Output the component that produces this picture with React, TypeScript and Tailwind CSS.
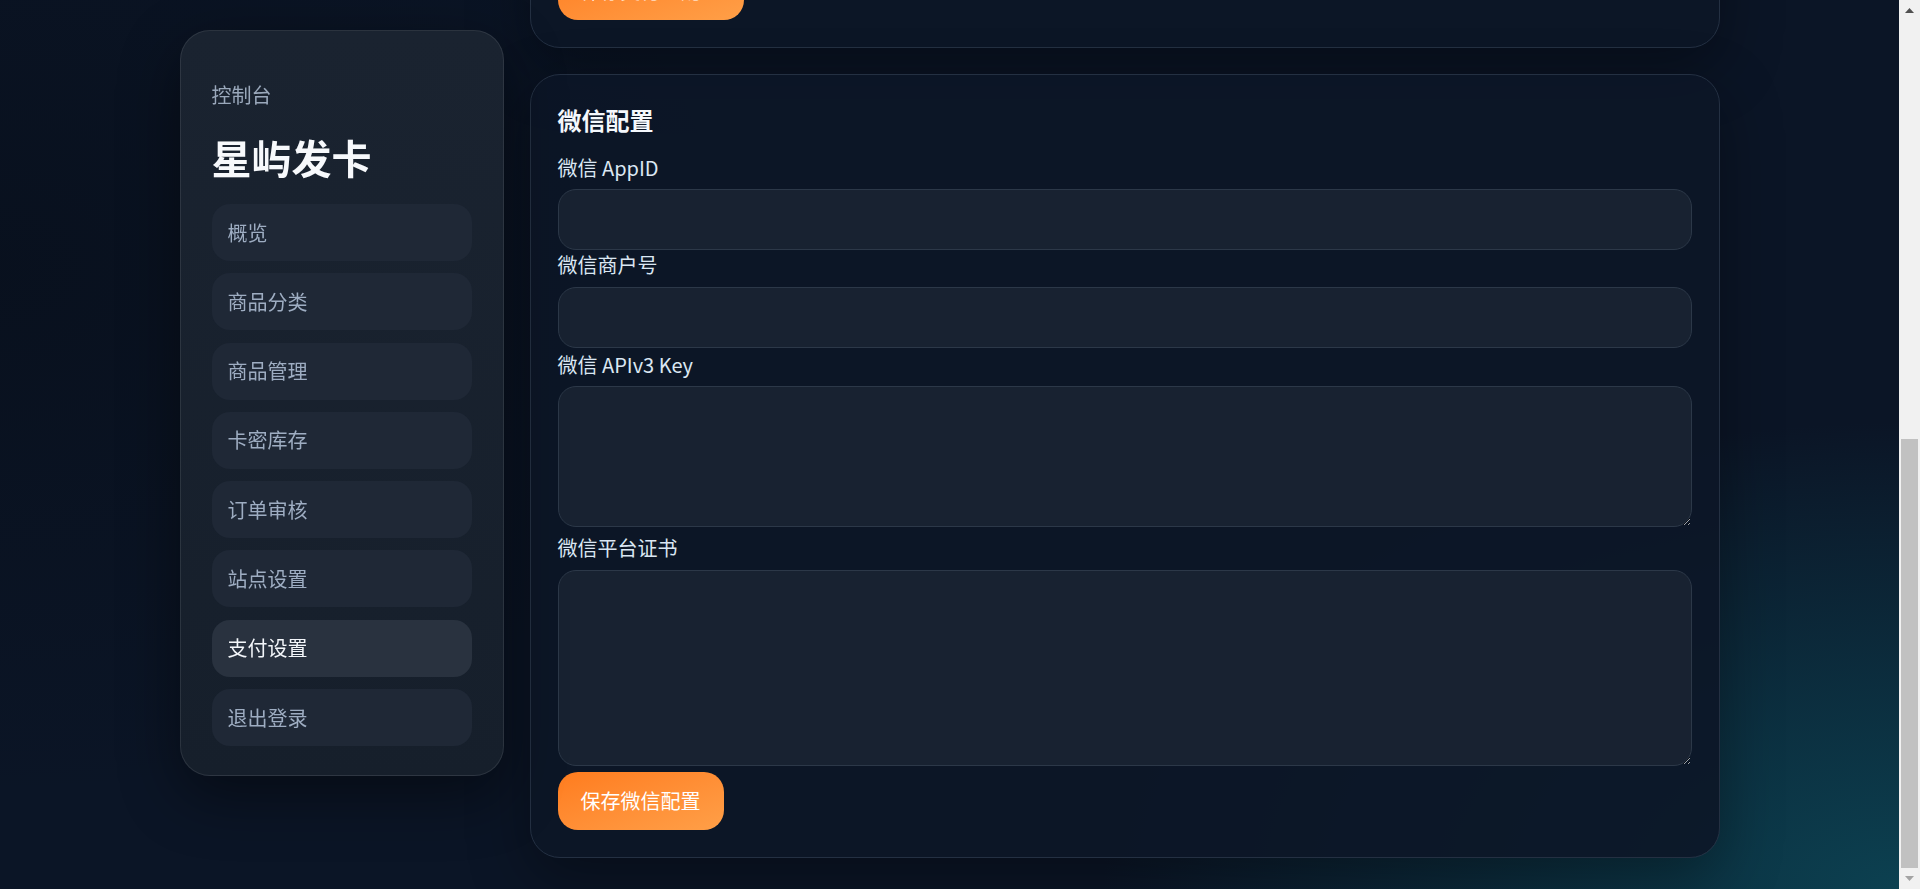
import { useLayoutEffect, useRef } from "react";

// ─── Sidebar ──────────────────────────────────────────────────────────────────

const navItems = [
  "概览",
  "商品分类",
  "商品管理",
  "卡密库存",
  "订单审核",
  "站点设置",
  "支付设置",
  "退出登录",
];

function Sidebar({ active }: { active: string }) {
  return (
    <aside className="sticky top-[30px] w-[324px] shrink-0 rounded-[30px] border border-white/[0.09] bg-linear-to-b from-[#1a2330] to-[#161f2b] px-[31px] pt-[49px] pb-[29px] shadow-[0_20px_60px_rgba(0,0,0,0.45)]">
      <p className="text-[20px] leading-[30px] text-[#9aa8bb]">控制台</p>
      <h1 className="mt-[23px] text-[40px] font-bold leading-[48px] text-[#f7f9fc]">
        星屿发卡
      </h1>
      <nav className="mt-[23px] flex flex-col gap-[12.3px]">
        {navItems.map((item) => (
          <a
            key={item}
            href="#"
            className={`flex h-[57px] items-center rounded-[18px] px-[16px] text-[20px] leading-[30px] ${
              item === active
                ? "bg-[#29323f] text-[#f3f6fa]"
                : "bg-[#1f2836] text-[#9eadc2]"
            }`}
          >
            {item}
          </a>
        ))}
      </nav>
    </aside>
  );
}

// ─── Form bits ────────────────────────────────────────────────────────────────

const labelCls = "block text-[20px] leading-[30px] text-[#dbe7f3]";
const fieldCls =
  "block w-full rounded-[18px] border border-[#2c3848] bg-[#182231] px-4 text-[20px] text-[#e5edf5] outline-none";

function SaveButton({ children }: { children: React.ReactNode }) {
  return (
    <button className="mt-[6px] flex h-[58px] w-fit items-center rounded-[20px] bg-linear-to-br from-[#ff7c1d] to-[#ff9f47] px-[23px] text-[20px] leading-[30px] text-white">
      {children}
    </button>
  );
}

function Card({ title, children }: { title: string; children: React.ReactNode }) {
  return (
    <section className="flex flex-col rounded-[30px] border border-[#243042] bg-[#0c1627]/90 px-[27px] pt-[27px] pb-[27px] shadow-[0_20px_60px_rgba(0,0,0,0.35)]">
      <h2 className="text-[24px] font-bold leading-[36px] text-[#f5f8fc]">{title}</h2>
      {children}
    </section>
  );
}

// ─── Window scrollbar (classic style) ─────────────────────────────────────────

function ScrollStrip() {
  return (
    <div className="flex w-[21px] shrink-0 flex-col bg-[#f1f1f1]">
      <div className="flex h-[21px] items-center justify-center">
        <svg width="9" height="5" viewBox="0 0 9 5">
          <path d="M0 5 L4.5 0 L9 5 Z" fill="#505050" />
        </svg>
      </div>
      <div className="flex flex-1 flex-col justify-end px-[2px]">
        <div className="h-[429px] bg-[#c1c1c1]" />
      </div>
      <div className="flex h-[21px] items-center justify-center">
        <svg width="9" height="5" viewBox="0 0 9 5">
          <path d="M0 0 L4.5 5 L9 0 Z" fill="#a3a3a3" />
        </svg>
      </div>
    </div>
  );
}

// ─── App ──────────────────────────────────────────────────────────────────────

export default function App() {
  const scroller = useRef<HTMLDivElement>(null);

  // page is shown scrolled to the end of the payment settings
  useLayoutEffect(() => {
    const el = scroller.current;
    if (el) el.scrollTop = el.scrollHeight;
  }, []);

  return (
    <div className="flex h-screen font-['Noto_Sans_CJK_SC','Noto_Sans',sans-serif]">
      <div className="h-full min-w-0 flex-1 bg-[#0b1526] bg-[radial-gradient(ellipse_60%_75%_at_100%_100%,rgba(12,72,88,0.85),rgba(11,21,38,0)_70%),radial-gradient(ellipse_40%_60%_at_0%_30%,rgba(6,12,22,0.5),rgba(11,21,38,0))]">
        <div
          ref={scroller}
          className="h-full overflow-y-auto [scrollbar-width:none] [&::-webkit-scrollbar]:hidden"
        >
          <div className="mx-auto flex w-[1540px] items-start gap-[26px] pt-[30px] pb-[31px]">
            <Sidebar active="支付设置" />

            <main className="flex min-w-0 flex-1 flex-col gap-[26px]">
              <Card title="支付宝配置">
                <label className={`${labelCls} mt-[15px]`}>支付宝 AppID</label>
                <input className={`${fieldCls} mt-[6px] h-[61px]`} />
                <label className={`${labelCls} mt-[1px]`}>支付宝应用私钥</label>
                <textarea className={`${fieldCls} mt-[6px] h-[230px] py-3`} />
                <label className={`${labelCls} mt-[1px]`}>支付宝公钥</label>
                <textarea className={`${fieldCls} mt-[6px] h-[230px] py-3`} />
                <label className={`${labelCls} mt-[1px]`}>异步通知地址</label>
                <input className={`${fieldCls} mt-[6px] h-[61px]`} />
                <SaveButton>保存支付宝配置</SaveButton>
              </Card>

              <Card title="微信配置">
                <label className={`${labelCls} mt-[15px]`}>微信 AppID</label>
                <input className={`${fieldCls} mt-[6px] h-[61px]`} />
                <label className={labelCls}>微信商户号</label>
                <input className={`${fieldCls} mt-[7px] h-[61px]`} />
                <label className={`${labelCls} mt-[2px]`}>微信 APIv3 Key</label>
                <textarea className={`${fieldCls} mt-[6px] h-[141px] py-3`} />
                <label className={`${labelCls} mt-[6px]`}>微信平台证书</label>
                <textarea className={`${fieldCls} mt-[7px] h-[196px] py-3`} />
                <SaveButton>保存微信配置</SaveButton>
              </Card>
            </main>
          </div>
        </div>
      </div>
      <ScrollStrip />
    </div>
  );
}
